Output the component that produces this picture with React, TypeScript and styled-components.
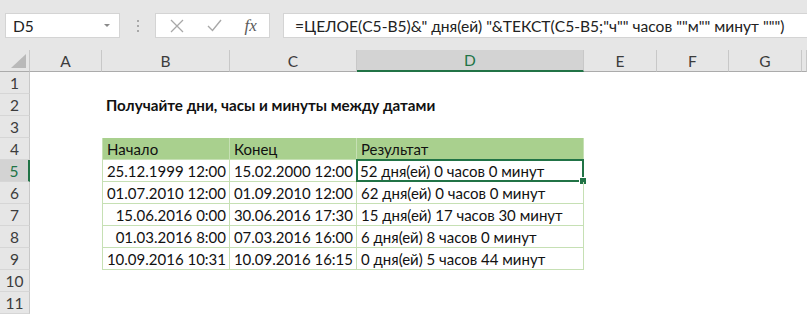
import React from "react";
import styled, { createGlobalStyle, css } from "styled-components";

const FONT = `Lato, "Noto Sans", "Open Sans", sans-serif`;
const GREEN = "#217346";

const Global = createGlobalStyle`
  html, body { margin: 0; padding: 0; background: #fff; }
  body { width: 807px; height: 316px; overflow: hidden; font-family: ${FONT}; }
  * { box-sizing: border-box; }
`;

const Toolbar = styled.div`
  height: 50px;
  background: #e6e6e6;
  display: flex;
  align-items: flex-start;
  padding: 13px 0 0 5px;
`;

const NameBox = styled.div`
  width: 115px;
  height: 25px;
  background: #fff;
  border: 1px solid #d4d4d4;
  display: flex;
  align-items: center;
  justify-content: space-between;
  padding: 0 9px 0 7px;
  font: 15.5px ${FONT};
  color: #222;
`;

const Caret = styled.span`
  width: 0;
  height: 0;
  border-left: 3px solid transparent;
  border-right: 3px solid transparent;
  border-top: 3px solid #8a8a8a;
`;

const Grip = styled.div`
  width: 35px;
  height: 25px;
  display: flex;
  flex-direction: column;
  align-items: center;
  justify-content: center;
  gap: 3px;
`;

const GripDot = styled.span`
  width: 2px;
  height: 2px;
  background: #a8a8a8;
`;

const FxBox = styled.div`
  width: 115px;
  height: 25px;
  background: #fff;
  border: 1px solid #d4d4d4;
  display: flex;
  align-items: center;
  padding-left: 3px;
`;

const FxSlot = styled.div`
  width: 40px;
  display: flex;
  align-items: center;
  justify-content: center;
`;

const FxLabel = styled.span`
  font: italic 17px "Liberation Serif", serif;
  color: #5a5a5a;
`;

const FormulaBox = styled.div`
  flex: 1;
  height: 25px;
  margin-left: 13px;
  background: #fff;
  border: 1px solid #d4d4d4;
  border-right: none;
  display: flex;
  align-items: center;
  padding-left: 11px;
  font: 15.6px ${FONT};
  color: #222;
  white-space: nowrap;
  overflow: hidden;
`;

const Sheet = styled.div`
  display: grid;
  grid-template-columns: 30px 72px 128px 127px 227px 73px 72px 73px 1fr;
  grid-auto-rows: 22px;
  font: 15px ${FONT};
  color: #111;
`;

const Corner = styled.div`
  background: #e6e6e6;
  border-right: 1px solid #c8c8c8;
  border-bottom: 1px solid #ababab;
  display: flex;
  align-items: flex-end;
  justify-content: flex-end;
  padding: 0 3px 3px 0;
`;

const ColHeader = styled.div<{ $active?: boolean }>`
  background: #e6e6e6;
  border-right: 1px solid #c8c8c8;
  border-bottom: 1px solid #ababab;
  display: flex;
  align-items: center;
  justify-content: center;
  font-size: 15.5px;
  color: #3c3c3c;
  ${(p) =>
    p.$active &&
    css`
      background: #d3d3d3;
      color: ${GREEN};
      border-bottom: 2px solid ${GREEN};
    `}
`;

const RowHeader = styled.div<{ $active?: boolean }>`
  background: #e6e6e6;
  border-right: 1px solid #c8c8c8;
  border-bottom: 1px solid #d6d6d6;
  display: flex;
  align-items: center;
  justify-content: center;
  font-size: 15.5px;
  color: #3c3c3c;
  ${(p) =>
    p.$active &&
    css`
      background: #d3d3d3;
      color: ${GREEN};
      border-right: 2px solid ${GREEN};
    `}
`;

const Cell = styled.div`
  display: flex;
  align-items: center;
  white-space: nowrap;
`;

const Title = styled(Cell)`
  font-weight: 700;
  font-size: 15.2px;
  padding-left: 4px;
  overflow: visible;
`;

const TableCell = styled(Cell)<{
  $head?: boolean;
  $right?: boolean;
  $first?: boolean;
  $selected?: boolean;
}>`
  position: relative;
  padding: 0 3px 0 4px;
  border-right: 1px solid #c6e0b4;
  border-bottom: 1px solid #c6e0b4;
  justify-content: ${(p) => (p.$right ? "flex-end" : "flex-start")};
  ${(p) => p.$first && css`border-left: 1px solid #c6e0b4;`}
  ${(p) => p.$head && css`background: #a9d08e;`}
  ${(p) =>
    p.$selected &&
    css`
      padding-left: 3px;
      &::before {
        content: "";
        position: absolute;
        left: -1px;
        top: -1px;
        right: -1px;
        bottom: -1px;
        border: 2px solid ${GREEN};
      }
      &::after {
        content: "";
        position: absolute;
        right: -4px;
        bottom: -4px;
        width: 6px;
        height: 6px;
        background: ${GREEN};
        border: 1px solid #fff;
      }
    `}
`;

const CrossIcon = () => (
  <svg width="14" height="14" viewBox="0 0 14 14">
    <path d="M1 1 L13 13 M13 1 L1 13" stroke="#a8a8a8" strokeWidth="1.3" fill="none" />
  </svg>
);

const CheckIcon = () => (
  <svg width="15" height="13" viewBox="0 0 15 13">
    <path d="M1 7 L5.5 11.5 L14 1" stroke="#a8a8a8" strokeWidth="1.4" fill="none" />
  </svg>
);

const CornerTriangle = () => (
  <svg width="15" height="14" viewBox="0 0 15 14">
    <polygon points="15,0 15,14 0,14" fill="#b9b9b9" />
  </svg>
);

const columns = ["A", "B", "C", "D", "E", "F", "G", ""];

const data: [string, string, string][] = [
  ["25.12.1999 12:00", "15.02.2000 12:00", "52 дня(ей) 0 часов 0 минут"],
  ["01.07.2010 12:00", "01.09.2010 12:00", "62 дня(ей) 0 часов 0 минут"],
  ["15.06.2016 0:00", "30.06.2016 17:30", "15 дня(ей) 17 часов 30 минут"],
  ["01.03.2016 8:00", "07.03.2016 16:00", "6 дня(ей) 8 часов 0 минут"],
  ["10.09.2016 10:31", "10.09.2016 16:15", "0 дня(ей) 5 часов 44 минут"],
];

const formula = `=ЦЕЛОЕ(C5-B5)&" дня(ей) "&ТЕКСТ(C5-B5;"ч"" часов ""м"" минут """)`;

const Blank = ({ n }: { n: number }) => (
  <>
    {Array.from({ length: n }).map((_, i) => (
      <Cell key={i} />
    ))}
  </>
);

export default function App() {
  return (
    <>
      <Global />
      <Toolbar>
        <NameBox>
          <span>D5</span>
          <Caret />
        </NameBox>
        <Grip>
          <GripDot />
          <GripDot />
          <GripDot />
        </Grip>
        <FxBox>
          <FxSlot>
            <CrossIcon />
          </FxSlot>
          <FxSlot>
            <CheckIcon />
          </FxSlot>
          <FxSlot>
            <FxLabel>fx</FxLabel>
          </FxSlot>
        </FxBox>
        <FormulaBox>{formula}</FormulaBox>
      </Toolbar>
      <Sheet>
        <Corner>
          <CornerTriangle />
        </Corner>
        {columns.map((c, i) => (
          <ColHeader key={i} $active={c === "D"}>
            {c}
          </ColHeader>
        ))}

        <RowHeader>1</RowHeader>
        <Blank n={8} />

        <RowHeader>2</RowHeader>
        <Cell />
        <Title>Получайте дни, часы и минуты между датами</Title>
        <Blank n={6} />

        <RowHeader>3</RowHeader>
        <Blank n={8} />

        <RowHeader>4</RowHeader>
        <Cell />
        <TableCell $head $first>Начало</TableCell>
        <TableCell $head>Конец</TableCell>
        <TableCell $head>Результат</TableCell>
        <Blank n={4} />

        {data.map((r, i) => (
          <React.Fragment key={i}>
            <RowHeader $active={i === 0}>{i + 5}</RowHeader>
            <Cell />
            <TableCell $first $right>
              {r[0]}
            </TableCell>
            <TableCell $right>{r[1]}</TableCell>
            <TableCell $selected={i === 0}>{r[2]}</TableCell>
            <Blank n={4} />
          </React.Fragment>
        ))}

        <RowHeader>10</RowHeader>
        <Blank n={8} />
        <RowHeader>11</RowHeader>
        <Blank n={8} />
      </Sheet>
    </>
  );
}
